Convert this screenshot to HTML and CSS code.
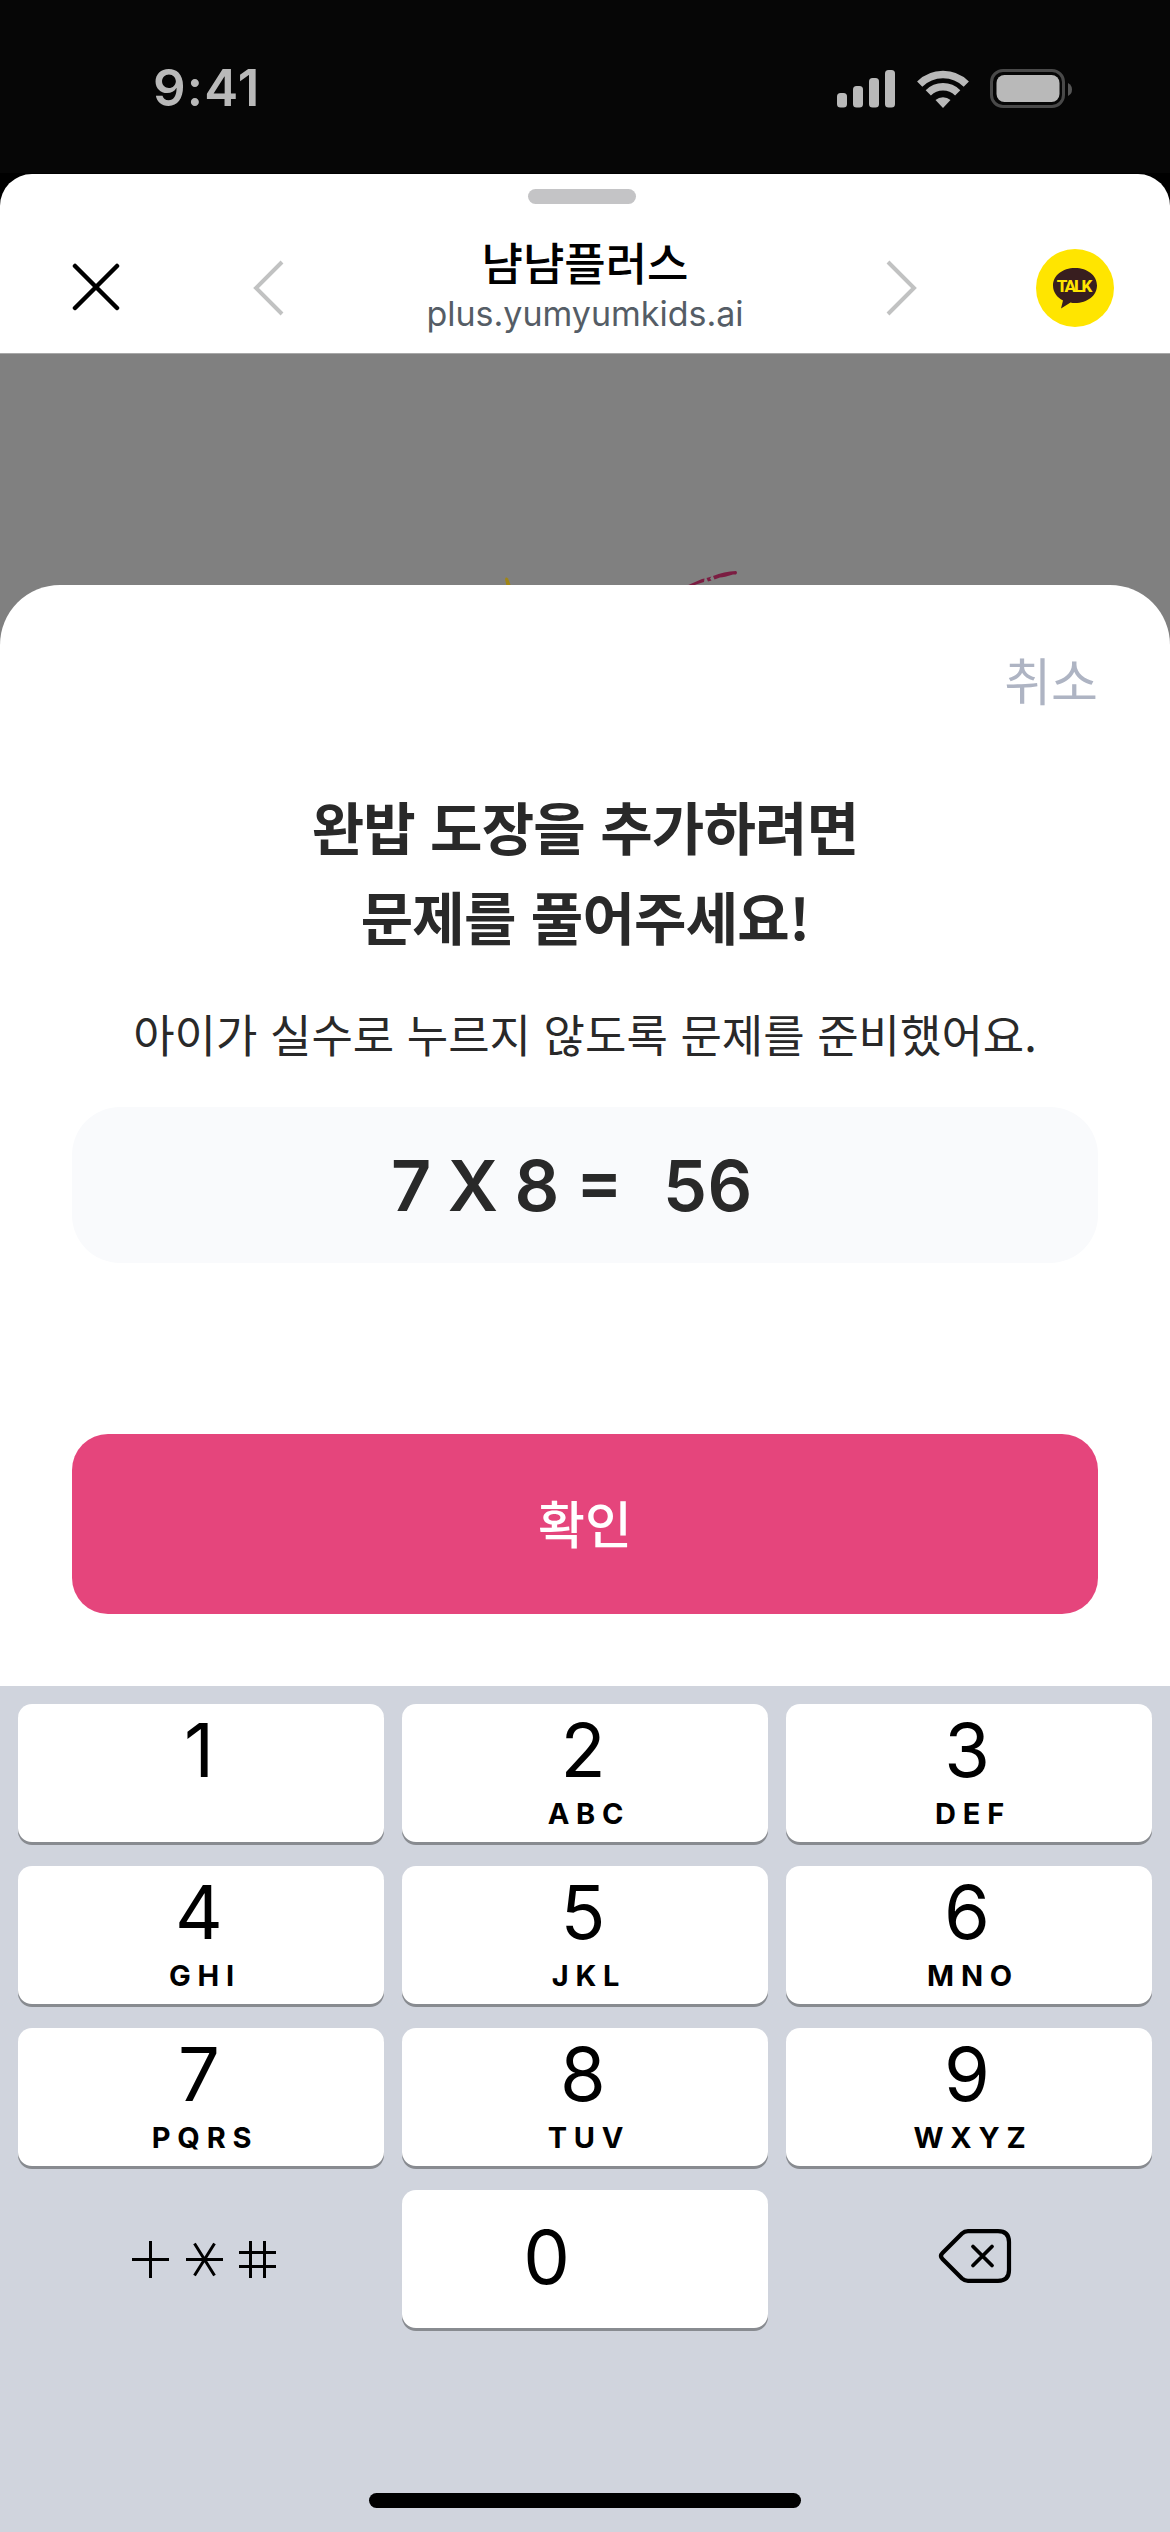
FILE: index.html
```html
<!DOCTYPE html>
<html lang="ko">
<head>
<meta charset="utf-8">
<title>냠냠플러스</title>
<link rel="stylesheet" href="styles.css">
</head>
<body>
<div class="screen">
  <div class="status">
    <span class="clock">9:41</span>
    <svg class="status-icons" width="240" height="46" viewBox="0 0 240 46">
      <g fill="#b9b9b9">
        <rect x="0" y="27" width="10" height="14.500" rx="3.500"/>
        <rect x="16" y="20" width="10" height="21.500" rx="3.500"/>
        <rect x="32" y="12" width="10" height="29.500" rx="3.500"/>
        <rect x="48" y="4" width="10" height="37.500" rx="3.500"/>
        <path d="M106 42L98.500 34A12 12 0 0 1 113.500 34Z"/>
        <rect x="159.500" y="9" width="63" height="27" rx="8"/>
      </g>
      <g fill="none" stroke="#b9b9b9" stroke-width="7.400">
        <path d="M91.300 26.800A20.800 20.800 0 0 1 120.700 26.800"/>
        <path d="M82.700 18.200A33 33 0 0 1 129.300 18.200"/>
      </g>
      <rect x="154.500" y="4.500" width="72" height="36" rx="11.500" fill="none" stroke="#494949" stroke-width="3"/>
      <path d="M231 17Q235 19 235 23.500Q235 28 231 30Z" fill="#555"/>
    </svg>
  </div>
  <div class="browser">
    <div class="grabber"></div>
    <div class="nav">
      <svg class="close" width="48" height="48" viewBox="0 0 48 48"><path d="M3 3L45 45M45 3L3 45" stroke="#000" stroke-width="4.500" stroke-linecap="round"/></svg>
      <svg class="chev" width="32" height="56" viewBox="0 0 32 56" fill="none"><path d="M30 2L4 28L30 54" stroke="#c1c2c2" stroke-width="4"/></svg>
      <div class="site"><div class="site-name">냠냠플러스</div><div class="site-url">plus.yumyumkids.ai</div></div>
      <svg class="chev" width="32" height="56" viewBox="0 0 32 56" fill="none"><path d="M2 2L28 28L2 54" stroke="#c1c2c2" stroke-width="4"/></svg>
      <svg class="talk" width="78" height="78" viewBox="0 0 78 78">
        <circle cx="39" cy="39" r="39" fill="#ffe500"/>
        <path d="M39 19C26.500 19 17 26.500 17 36.500C17 43 21 48.500 27 51.500L25 59.500L34.500 53.500Q36.500 54 39 54C51.500 54 61 46.500 61 36.500S51.500 19 39 19Z" fill="#381e1f"/>
        <text x="38.500" y="43" class="talk-word" textLength="35.500" lengthAdjust="spacing">TALK</text>
      </svg>
    </div>
  </div>
  <div class="page">
    <svg class="peek" width="280" height="40" viewBox="480 545 280 40">
      <path d="M505 579Q506 576.500 508 578.500L511 586H506.500Z" fill="#a08515"/>
      <path d="M686 586L702 579L704.500 578.500L704 582L696 584.500L693 586Z" fill="#7b1d42"/>
      <path d="M706.500 578L710 577L711.500 576.500L710 578.500L711.500 580.500L708 581.500ZM713 576Q724 571.500 736 571Q738 572.500 736 574.500L733 574.500Q724 577.500 720 577.500L714.500 579.500Z" fill="#7b1d42"/>
    </svg>
    <div class="sheet">
      <div class="cancel">취소</div>
      <h1 class="heading">완밥 도장을 추가하려면<br>문제를 풀어주세요!</h1>
      <p class="hint">아이가 실수로 누르지 않도록 문제를 준비했어요.</p>
      <div class="quiz"><span>7 X 8 =</span><span class="answer">56</span></div>
      <div class="confirm">확인</div>
    </div>
  </div>
  <div class="keyboard">
    <div class="keys">
      <div class="key"><b>1</b></div>
      <div class="key"><b>2</b><i>ABC</i></div>
      <div class="key"><b>3</b><i>DEF</i></div>
      <div class="key"><b>4</b><i>GHI</i></div>
      <div class="key"><b>5</b><i>JKL</i></div>
      <div class="key"><b>6</b><i>MNO</i></div>
      <div class="key"><b>7</b><i>PQRS</i></div>
      <div class="key"><b>8</b><i>TUV</i></div>
      <div class="key"><b>9</b><i>WXYZ</i></div>
      <div class="key plain symbols">
        <svg width="146" height="40" viewBox="131 2239 146 40" fill="none" stroke="#000" stroke-width="3">
          <path d="M132 2259.500H169M150.500 2241V2278M186 2259.500H223M194.500 2243.500L214.500 2275.500M214.500 2243.500L194.500 2275.500M239 2252.500H276M239 2266.500H276M250.500 2241V2278M264.500 2241V2278"/>
        </svg>
      </div>
      <div class="key zero"><b>0</b></div>
      <div class="key plain erase">
        <svg width="76" height="56" viewBox="938 2228 76 56" fill="none" stroke="#000" stroke-width="4.200" stroke-linecap="round" stroke-linejoin="round">
          <path d="M968 2231.200H998Q1009 2231.200 1009 2242V2270Q1009 2280.800 998 2280.800H968Q964.500 2280.800 962 2278.500L942.500 2259Q939.500 2256 942.500 2253L962 2233.500Q964.500 2231.200 968 2231.200Z"/>
          <path stroke-width="3.800" d="M973 2246.500L992 2265.500M992 2246.500L973 2265.500"/>
        </svg>
      </div>
    </div>
    <div class="home"></div>
  </div>
</div>
</body>
</html>
```

FILE: styles.css
```css
* { box-sizing: border-box; }
body { margin: 0; background: #000; font-family: Inter, "Noto Sans CJK KR", sans-serif; }
.screen { width: 1170px; height: 2532px; display: flex; flex-direction: column; overflow: hidden; }
.status { height: 174px; flex: none; background: #060606; border-bottom: 1px solid #000; display: flex; justify-content: space-between; align-items: flex-start; padding: 57px 93px 0 153px; }
.clock { color: #b9b9b9; font-size: 51px; line-height: 62px; font-weight: 600; letter-spacing: 1.2px; }
.status-icons { margin-top: 9px; }
.browser { height: 179px; flex: none; background: #fff; border-radius: 32px 32px 0 0; padding-top: 15px; }
.grabber { width: 108px; height: 15px; border-radius: 8px; background: #c4c4c6; margin: 0 0 0 528px; }
.nav { display: flex; align-items: center; height: 134px; padding: 0 56px 0 72px; margin-top: 17px; }
.close { margin: 0 132px 2px 0; }
.chev { flex: none; }
.site { flex: 1; text-align: center; white-space: nowrap; }
.site-name { font-family: "Noto Sans CJK KR", sans-serif; font-weight: 500; font-size: 45px; line-height: 54px; margin-top: -6px; padding-bottom: 4px; color: #000; }
.site-url { font-size: 34px; line-height: 42px; color: #555d66; }
.talk { margin-left: 118px; flex: none; }
.talk-word { font: 800 17px Roboto, sans-serif; fill: #ffe500; text-anchor: middle; }
.page { height: 1333px; flex: none; background: #808080; border-top: 1px solid #a8a8a8; padding-top: 231px; position: relative; }
.peek { position: absolute; left: 480px; top: 191px; }
.sheet { position: relative; height: 1101px; background: #fff; border-radius: 60px 60px 0 0; padding: 56px 72px 0; display: flex; flex-direction: column; font-family: "Noto Sans CJK KR", sans-serif; color: #292929; }
.cancel { text-align: right; font-size: 51px; line-height: 76px; color: #aeb4c3; }
.heading { margin: 63px 0 0; text-align: center; font-size: 57px; letter-spacing: -.8px; line-height: 90px; font-weight: 700; }
.hint { margin: 40px 0 0; text-align: center; font-size: 45px; line-height: 68px; white-space: nowrap; }
.quiz { margin-top: 39px; height: 156px; border-radius: 48px; background: #f9fafc; display: flex; align-items: center; padding-left: 319px; gap: 40px; font: 600 70px Inter, sans-serif; white-space: pre; word-spacing: -1.2px; }
.answer { letter-spacing: .5px; }
.confirm { margin-top: 171px; height: 180px; border-radius: 36px; background: #e5457c; color: #fff; display: flex; align-items: center; justify-content: center; padding-bottom: 5px; font-size: 51px; font-weight: 500; }
.keyboard { flex: 1; background: #d0d4dd; padding: 18px 18px 24px; display: flex; flex-direction: column; justify-content: space-between; align-items: center; }
.keys { width: 1134px; display: grid; grid-template-columns: repeat(3, 366px); grid-auto-rows: 138px; gap: 24px 18px; }
.key { background: #fff; border-radius: 14px; box-shadow: 0 3px 0 #888b90; display: flex; flex-direction: column; align-items: center; color: #000; }
.key b { font-weight: 400; font-size: 74px; line-height: 88px; margin-top: 2px; padding-right: 4px; }
.key i { font-style: normal; font-weight: 700; font-size: 29px; line-height: 36px; letter-spacing: 6.8px; margin-top: 2px; padding-left: 8px; }
.plain { background: none; box-shadow: none; }
.symbols { align-items: flex-start; padding: 49px 0 0 113px; }
.zero b { margin-top: 23px; padding-right: 77px; }
.erase { align-items: flex-start; padding: 38px 0 0 152px; }
.home { width: 432px; height: 15px; border-radius: 8px; background: #000; }
```
